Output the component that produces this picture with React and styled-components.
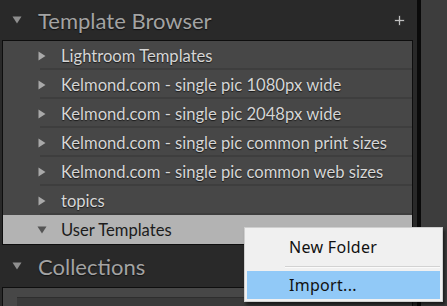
import React from "react";
import styled, { createGlobalStyle } from "styled-components";

const Global = createGlobalStyle`
  html, body { margin: 0; padding: 0; background: #282828; overflow: hidden; }
  #root { width: 447px; height: 306px; }
`;

const Page = styled.div`
  position: relative;
  display: flex;
  width: 447px;
  height: 306px;
  overflow: hidden;
  font-family: Lato, "Open Sans", sans-serif;
`;

const LeftColumn = styled.div`
  width: 417px;
  background: #292929;
  display: flex;
  flex-direction: column;
  overflow: hidden;
`;

const Divider = styled.div`
  width: 4px;
  background: #0a0a0a;
`;

const RightStrip = styled.div`
  flex: 1;
  background: #3d3d3d;
`;

const SectionHeader = styled.div`
  flex: none;
  height: ${(p) => p.$h}px;
  display: flex;
  align-items: center;
  padding: 0 12px 0 12px;
  box-sizing: border-box;
`;

const HeaderTitle = styled.span`
  flex: 1;
  margin-left: 16px;
  font-size: 22px;
  color: #a3a3a3;
  text-shadow: 0 1px 1px #111;
`;

const Tri = styled.svg`
  flex: none;
  display: block;
`;

const Panel = styled.div`
  flex: none;
  margin: 0 4px 0 2px;
  border: 1px solid #0e0e0e;
  background: #474747;
  display: flex;
  flex-direction: column;
`;

const Row = styled.div`
  height: 29px;
  display: flex;
  align-items: center;
  position: relative;
  background: ${(p) => (p.$selected ? "#b3b3b3" : "transparent")};
  padding-left: 34px;
  box-sizing: border-box;
  &::after {
    content: "";
    display: ${(p) => (p.$last ? "none" : "block")};
    position: absolute;
    left: 37px;
    right: 0;
    bottom: 0;
    height: 2px;
    background: #3e3e3e;
  }
`;

const RowLabel = styled.span`
  margin-left: 14px;
  font-size: 16.6px;
  color: ${(p) => (p.$selected ? "#1c1c1c" : "#d6d6d6")};
  text-shadow: ${(p) => (p.$selected ? "none" : "0 1px 1px #1a1a1a")};
  white-space: nowrap;
`;

const FilterBar = styled.div`
  margin: 9px 0 0 14px;
  height: 24px;
  background: #3a3a3a;
  border-top: 1px solid #2e2e2e;
  display: flex;
  align-items: center;
  padding-left: 12px;
  font-size: 16px;
  color: #bdbdbd;
`;

const Menu = styled.div`
  position: absolute;
  left: 244px;
  top: 227px;
  width: 199px;
  height: 75px;
  box-sizing: border-box;
  background: #f0f0f0;
  border: 1px solid #cfcfcf;
  box-shadow: 2px 3px 3px rgba(0, 0, 0, 0.55);
  padding: 2px;
  display: flex;
  flex-direction: column;
  font-family: "Noto Sans", "Open Sans", sans-serif;
`;

const MenuItem = styled.div`
  height: ${(p) => p.$h}px;
  display: flex;
  align-items: center;
  padding-left: 42px;
  font-size: 16px;
  letter-spacing: 0.3px;
  color: #111;
  background: ${(p) => (p.$active ? "#91c9f7" : "transparent")};
`;

const MenuSep = styled.div`
  height: 1px;
  margin: 2px 0 3px 38px;
  background: #d2d2d2;
  border-bottom: 1px solid #fafafa;
`;

const Right = ({ color }) => (
  <Tri width="10" height="10" viewBox="0 0 10 10">
    <path d="M1.5 0.5 L8.5 5 L1.5 9.5 Z" fill={color} />
  </Tri>
);

const Down = ({ color, size = 10 }) => (
  <Tri width={size} height={size} viewBox="0 0 10 10">
    <path d="M0.5 1.5 L9.5 1.5 L5 8.5 Z" fill={color} />
  </Tri>
);

const Plus = () => (
  <Tri width="11" height="11" viewBox="0 0 11 11">
    <path d="M4.5 0.5 H6.5 V4.5 H10.5 V6.5 H6.5 V10.5 H4.5 V6.5 H0.5 V4.5 H4.5 Z" fill="#bfbfbf" stroke="#151515" strokeWidth="0.6" />
  </Tri>
);

const templates = [
  "Lightroom Templates",
  "Kelmond.com - single pic 1080px wide",
  "Kelmond.com - single pic 2048px wide",
  "Kelmond.com - single pic common print sizes",
  "Kelmond.com - single pic common web sizes",
  "topics",
];

export default function App() {
  return (
    <>
      <Global />
      <Page>
        <LeftColumn>
          <SectionHeader $h={40}>
            <Down color="#8e8e8e" />
            <HeaderTitle>Template Browser</HeaderTitle>
            <Plus />
          </SectionHeader>
          <Panel>
            {templates.map((t) => (
              <Row key={t}>
                <Right color="#a9a9a9" />
                <RowLabel>{t}</RowLabel>
              </Row>
            ))}
            <Row $selected $last>
              <Down color="#555555" />
              <RowLabel $selected>User Templates</RowLabel>
            </Row>
          </Panel>
          <SectionHeader $h={42}>
            <Down color="#8e8e8e" />
            <HeaderTitle>Collections</HeaderTitle>
          </SectionHeader>
          <Panel>
            <FilterBar>● Filter Collections</FilterBar>
          </Panel>
        </LeftColumn>
        <Divider />
        <RightStrip />
        <Menu>
          <MenuItem $h={36}>New Folder</MenuItem>
          <MenuSep />
          <MenuItem $h={30} $active>Import...</MenuItem>
        </Menu>
      </Page>
    </>
  );
}
